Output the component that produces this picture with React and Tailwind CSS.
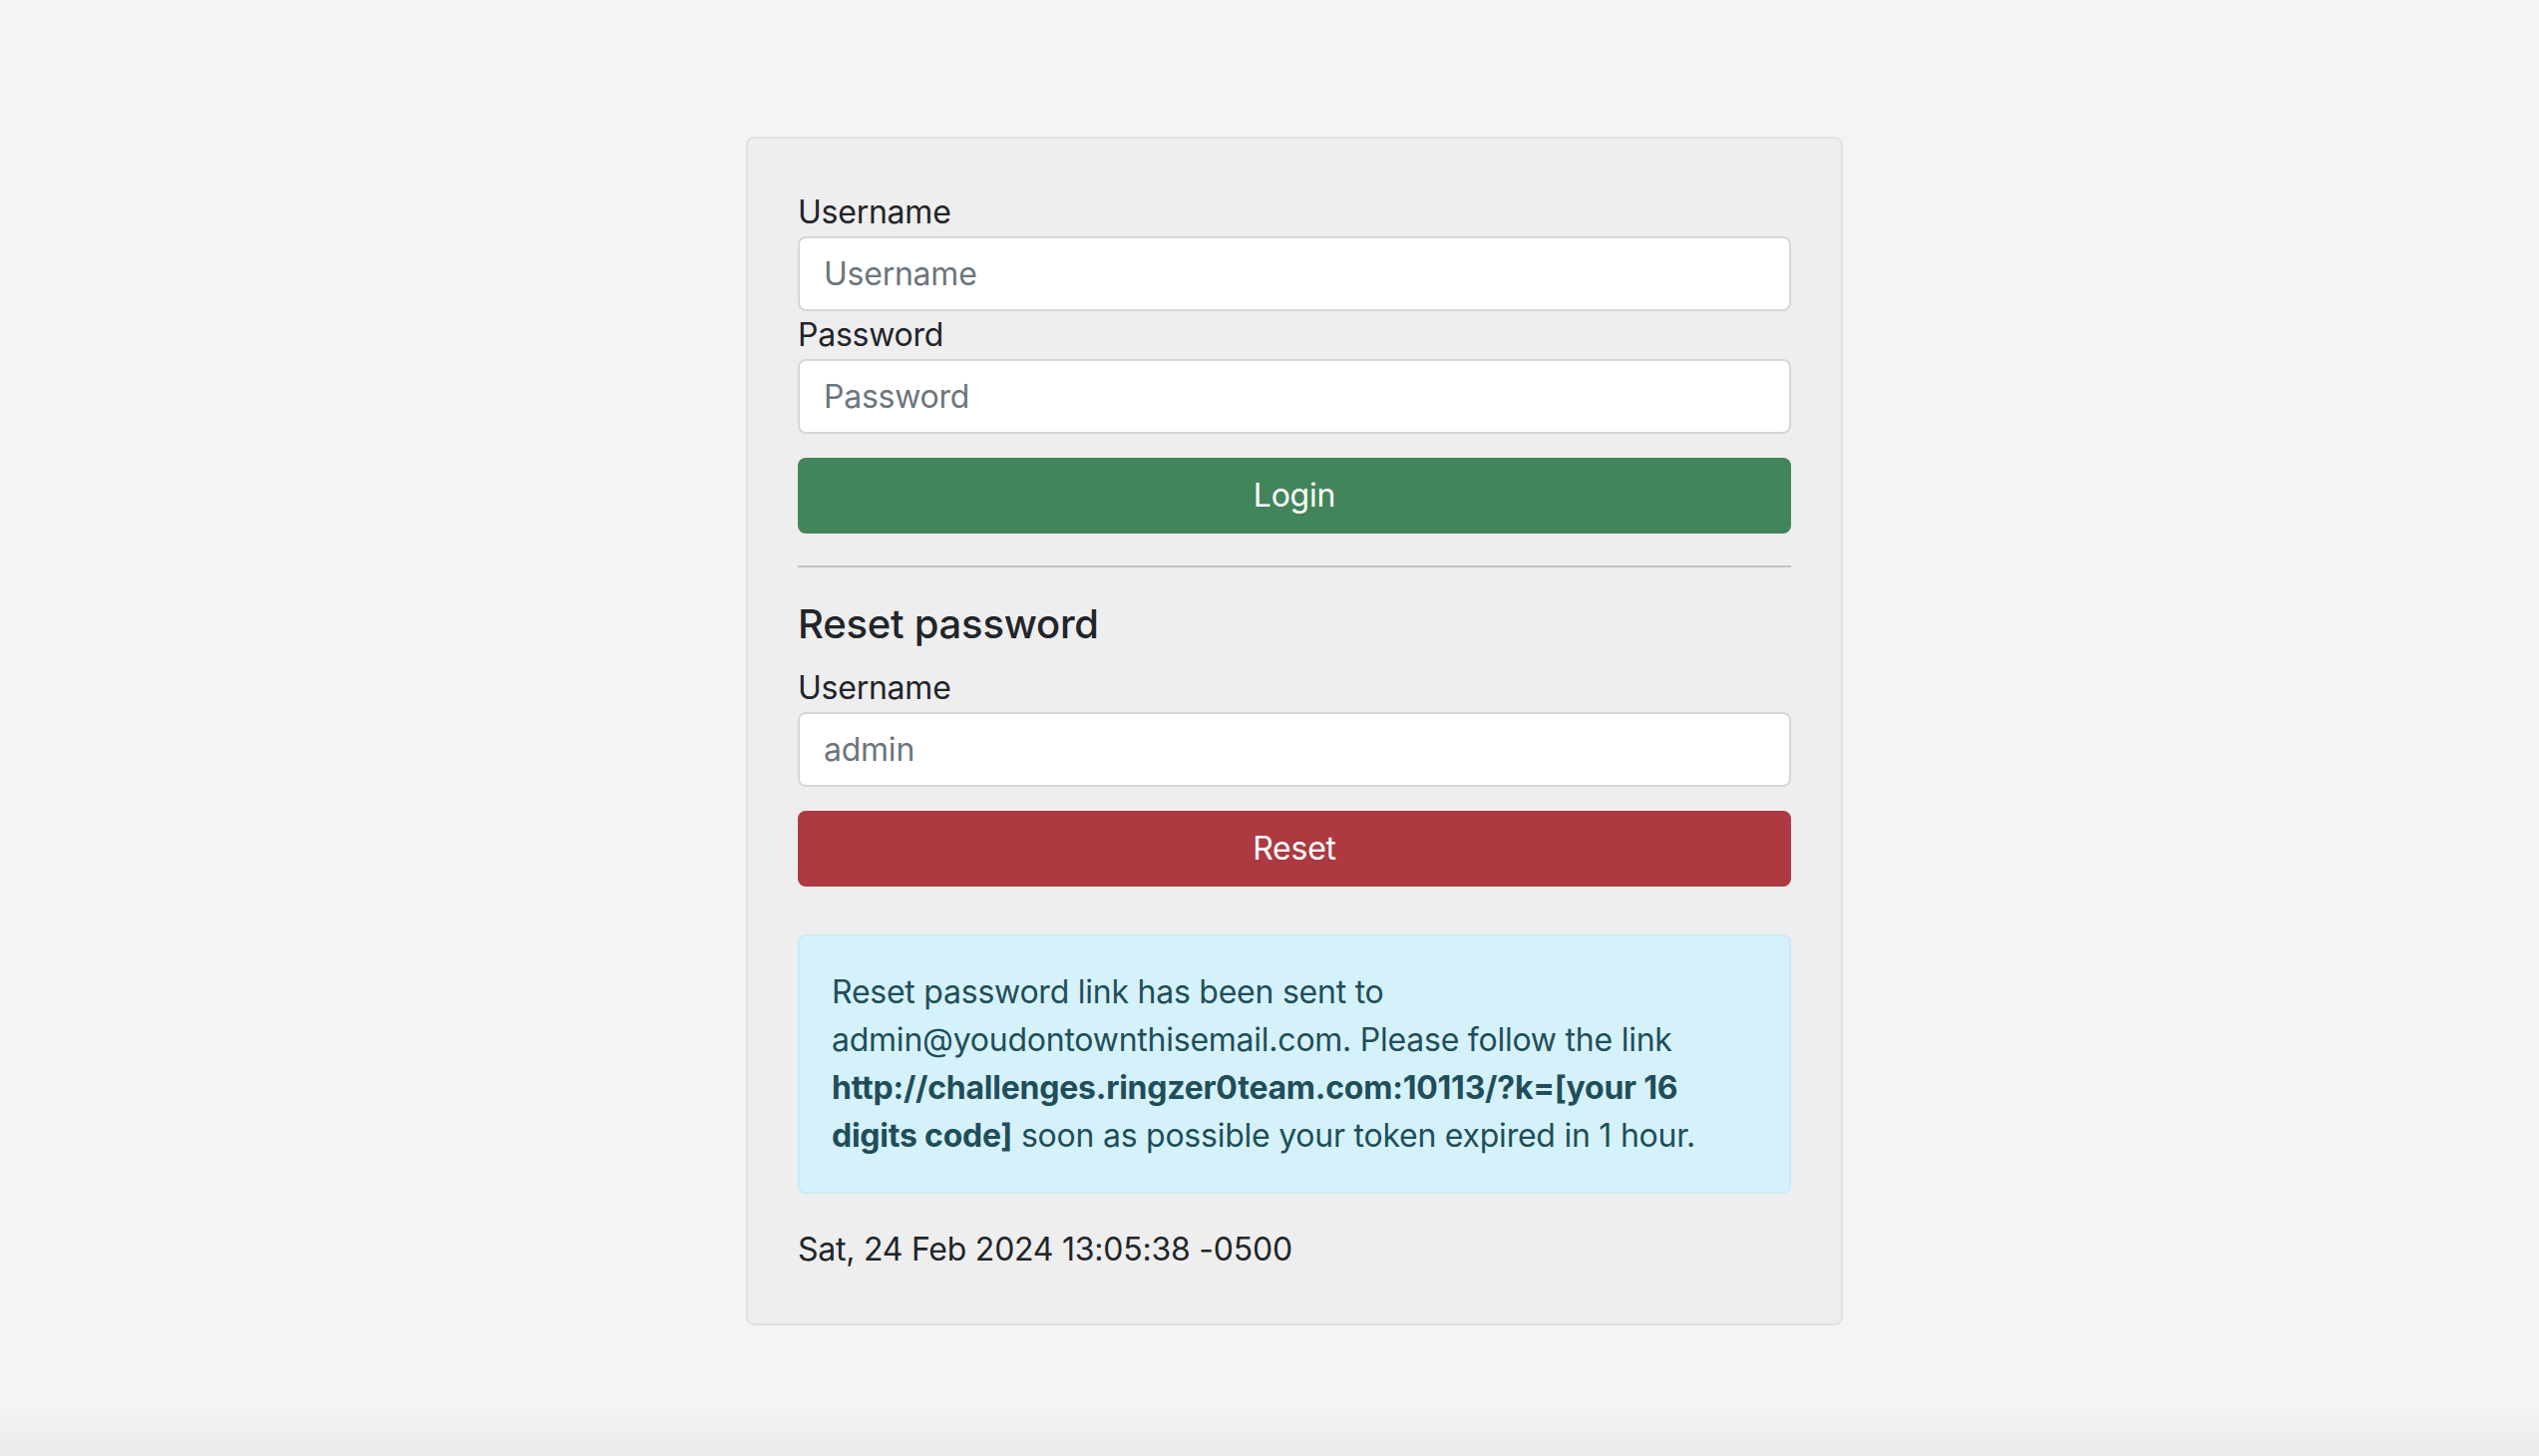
import React from 'react';

const FONT = "font-['Inter','Liberation_Sans',sans-serif] tracking-[-0.015em]";

function Field({ label, placeholder, type = 'text' }) {
  return (
    <div className="flex flex-col">
      <label className="text-[32px] leading-[48px] text-[#212529]">{label}</label>
      <input
        type={type}
        placeholder={placeholder}
        className="h-[75px] w-full rounded-[8px] border-2 border-[#d3d7db] bg-white px-[24px] text-[32px] text-[#212529] placeholder:text-[#6c757d] outline-none"
      />
    </div>
  );
}

export default function App() {
  return (
    <div className={`${FONT} flex h-[1460px] flex-col bg-[#f4f4f4]`}>
      <div className="flex justify-center pl-[50px] pt-[137px]">
        <div className="w-[1100px] rounded-[8px] border-2 border-[#e0e0e0] bg-[#eeeeee] px-[50px] py-[50px]">
          <Field label="Username" placeholder="Username" />
          <Field label="Password" placeholder="Password" type="password" />
          <button className="mt-[24px] h-[76px] w-full rounded-[8px] bg-[#42855a] text-[32px] text-white">
            Login
          </button>

          <hr className="mt-[32px] mb-[33px] border-t-2 border-[#c2c2c2]" />

          <h5 className="mb-[16px] text-[40px] font-medium leading-[48px] text-[#212529]">Reset password</h5>
          <Field label="Username" placeholder="admin" />
          <button className="mt-[24px] h-[76px] w-full rounded-[8px] bg-[#ad3a40] text-[32px] text-white">
            Reset
          </button>

          <div className="mt-[48px] rounded-[8px] border-2 border-[#c4edf8] bg-[#d5f2fa] px-[32px] py-[32px] text-[32px] leading-[48px] text-[#1f4e5a]">
            Reset password link has been sent to admin@youdontownthisemail.com. Please follow the link{' '}
            <b className="font-bold">http://challenges.ringzer0team.com:10113/?k=[your 16 digits code]</b> soon as
            possible your token expired in 1 hour.
          </div>

          <p className="mt-[32px] text-[32px] leading-[48px] text-[#212529]">Sat, 24 Feb 2024 13:05:38 -0500</p>
        </div>
      </div>
      <div className="flex-1" />
      <div className="h-[50px] bg-linear-to-b from-[#f4f4f4] to-[#eaeaea]" />
    </div>
  );
}
